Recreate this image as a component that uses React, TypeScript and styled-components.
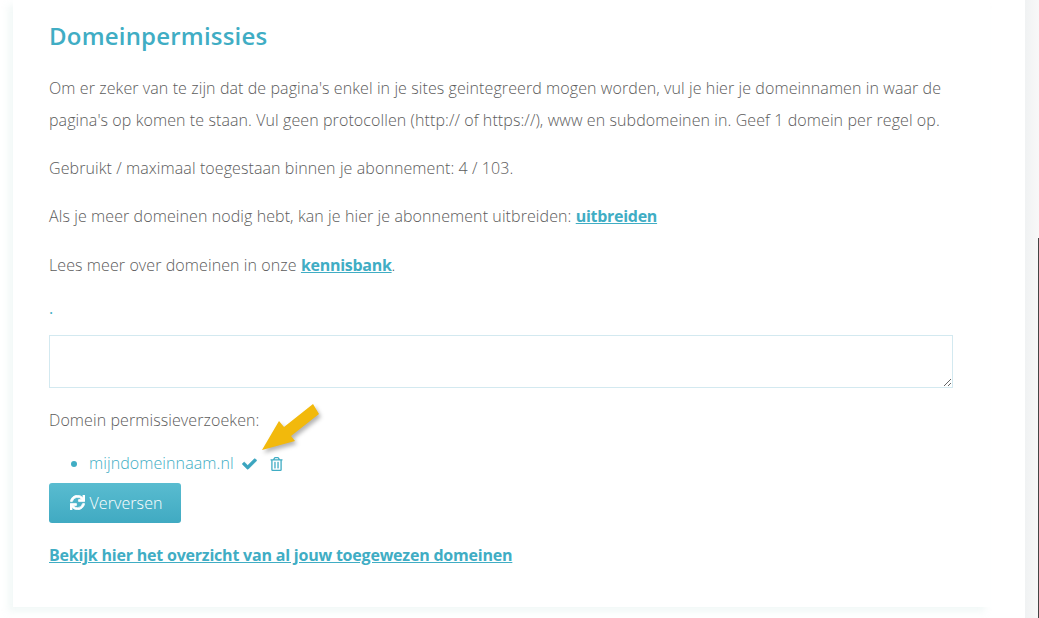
import React from 'react';
import styled, { createGlobalStyle } from 'styled-components';
import { FaCheck, FaRegTrashAlt, FaSync } from 'react-icons/fa';

const GlobalStyle = createGlobalStyle`
  html, body {
    margin: 0;
    padding: 0;
    background: #fff;
    overflow: hidden;
  }
  body {
    font-family: "Open Sans", "Liberation Sans", sans-serif;
    font-size: 16px;
    font-weight: 300;
    letter-spacing: 0.09px;
    color: #5c5c5c;
  }
`;

const App = () => {
  return (
    <Page>
      <GlobalStyle />
      <Main>
        <Card>
          <Title>Domeinpermissies</Title>
          <Intro>
            Om er zeker van te zijn dat de pagina's enkel in je sites geintegreerd mogen worden, vul je hier je domeinnamen in waar de
            pagina's op komen te staan. Vul geen protocollen (http:// of https://), www en subdomeinen in. Geef 1 domein per regel op.
          </Intro>
          <Paragraph>Gebruikt / maximaal toegestaan binnen je abonnement: 4 / 103.</Paragraph>
          <Paragraph>
            Als je meer domeinen nodig hebt, kan je hier je abonnement uitbreiden: <StrongLink href="#">uitbreiden</StrongLink>
          </Paragraph>
          <Paragraph>
            Lees meer over domeinen in onze <StrongLink href="#">kennisbank</StrongLink>.
          </Paragraph>
          <Dot>.</Dot>
          <DomainField />
          <RequestLabel>Domein permissieverzoeken:</RequestLabel>
          <RequestList>
            <RequestItem>
              <DomainName href="#">mijndomeinnaam.nl</DomainName>
              <CheckIcon />
              <TrashIcon />
            </RequestItem>
          </RequestList>
          <RefreshButton type="button">
            <RefreshIcon />
            Verversen
          </RefreshButton>
          <OverviewLink href="#">Bekijk hier het overzicht van al jouw toegewezen domeinen</OverviewLink>
        </Card>
      </Main>
      <Scrollbar>
        <ScrollThumb />
      </Scrollbar>
      <Arrow width="70" height="60" viewBox="0 0 70 60">
        <polygon points="6,50 23,21 28,27 57,4 63,14 35,36 39,41" fill="#f2b90c" />
      </Arrow>
    </Page>
  );
};

export default App;

const Page = styled.div`
  position: relative;
  display: flex;
  width: 1039px;
  height: 618px;
  overflow: hidden;
`;

const Main = styled.main`
  flex: 1;
  padding-left: 13px;
  background: #fff;
`;

const Card = styled.section`
  width: 977px;
  height: 607px;
  box-sizing: border-box;
  padding: 19px 36px 0;
  background: #fff;
  box-shadow: -5px 5px 7px rgba(175, 215, 205, 0.17);
`;

const Title = styled.h2`
  margin: 0 0 19px;
  font-size: 24px;
  line-height: 34px;
  font-weight: 600;
  letter-spacing: 0.2px;
  color: #40adc4;
`;

const Paragraph = styled.p`
  margin: 0 0 16.4px;
  line-height: 32px;
`;

const Intro = styled(Paragraph)`
  width: 904px;
  margin-bottom: 16px;
`;

const StrongLink = styled.a`
  font-weight: 700;
  letter-spacing: -0.28px;
  color: #40adc4;
  text-decoration: underline;
`;

const Dot = styled.div`
  height: 37.7px;
  line-height: 22px;
  font-weight: 400;
  color: #40adc4;
`;

const DomainField = styled.textarea`
  display: block;
  width: 904px;
  height: 53px;
  box-sizing: border-box;
  padding: 6px 12px;
  border: 1px solid #d3e9f0;
  border-radius: 0;
  background: #fff;
  outline: none;
`;

const RequestLabel = styled.div`
  margin-top: 16px;
  line-height: 32px;
`;

const RequestList = styled.ul`
  margin: 11px 0 0;
  padding: 0 0 0 40px;
  color: #40adc4;
`;

const RequestItem = styled.li`
  line-height: 32px;
  height: 36px;
`;

const DomainName = styled.a`
  color: #40adc4;
  text-decoration: none;
`;

const CheckIcon = styled(FaCheck)`
  margin-left: 8px;
  width: 15px;
  height: 14px;
  vertical-align: -2px;
  color: #3ba5bf;
  stroke: currentColor;
  stroke-width: 30;
`;

const TrashIcon = styled(FaRegTrashAlt)`
  margin-left: 13px;
  width: 13px;
  height: 14px;
  vertical-align: -2px;
  color: #40adc4;
`;

const RefreshIcon = styled(FaSync)`
  width: 15px;
  height: 15px;
  stroke: currentColor;
  stroke-width: 25;
`;

const RefreshButton = styled.button`
  display: flex;
  align-items: center;
  justify-content: center;
  gap: 4px;
  width: 132px;
  height: 40px;
  padding: 0 0 0 3px;
  border: none;
  border-radius: 3px;
  background: linear-gradient(#59bcd0, #40aac2);
  color: #fff;
  font-family: inherit;
  font-size: 16px;
  font-weight: 300;
  letter-spacing: 0.09px;
`;

const OverviewLink = styled.a`
  display: block;
  margin-top: 17px;
  line-height: 30px;
  font-weight: 700;
  letter-spacing: -0.21px;
  color: #40adc4;
  text-decoration: underline;
`;

const Scrollbar = styled.aside`
  position: relative;
  width: 14px;
  background: linear-gradient(90deg, #f0f2f3, #f8f8f8);
`;

const ScrollThumb = styled.div`
  position: absolute;
  top: 238px;
  right: 0;
  bottom: 0;
  width: 1px;
  background: #444;
`;

const Arrow = styled.svg`
  position: absolute;
  left: 256px;
  top: 400px;
  filter: drop-shadow(2px 3px 2px rgba(0, 0, 0, 0.3));
`;
